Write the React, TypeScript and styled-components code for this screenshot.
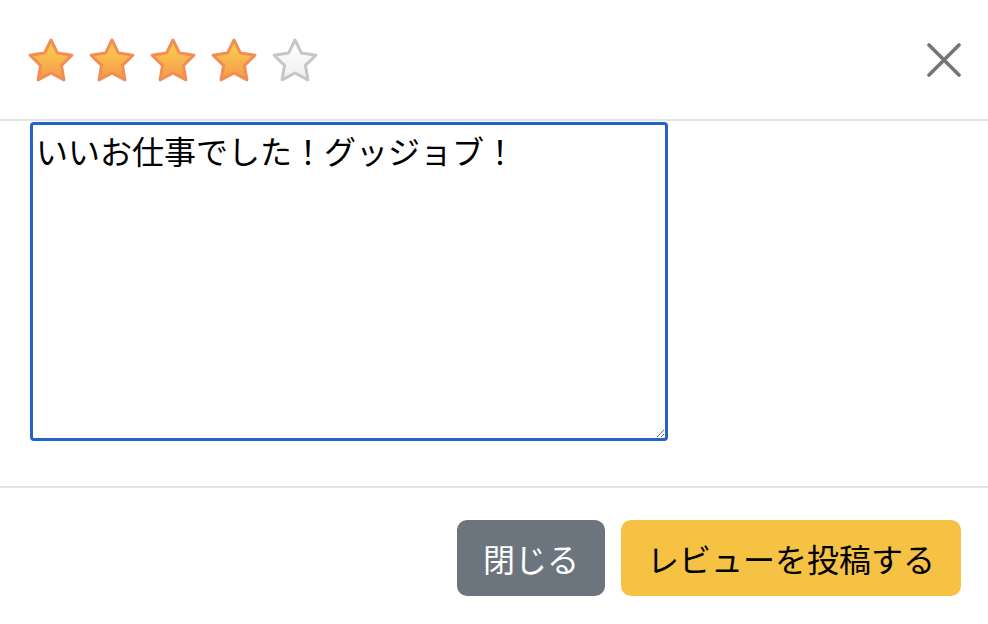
import React from 'react'
import styled, { createGlobalStyle } from 'styled-components'

const GlobalStyle = createGlobalStyle`
  html, body {
    margin: 0;
    padding: 0;
    background: #ffffff;
  }
  body {
    font-family: "Noto Sans CJK JP", "Noto Sans", sans-serif;
    color: #212529;
  }
`;

const Modal = styled.div`
  width: 988px;
  height: 624px;
  display: flex;
  flex-direction: column;
  background: #fff;
`;

const Header = styled.div`
  height: 121px;
  display: flex;
  align-items: center;
  justify-content: space-between;
  padding: 0 26px 0 27px;
  border-bottom: 2px solid #e3e4e6;
  box-sizing: border-box;
`;

const Stars = styled.div`
  display: flex;
  gap: 13px;
`;

const CloseButton = styled.button`
  width: 36px;
  height: 36px;
  padding: 0;
  border: none;
  background: none;
  display: flex;
  align-items: center;
  justify-content: center;
  cursor: pointer;
`;

const Body = styled.div`
  padding: 1px 30px 45px;
  border-bottom: 2px solid #e3e4e6;
`;

const TextArea = styled.textarea`
  display: block;
  width: 638px;
  height: 319px;
  box-sizing: border-box;
  border: 3px solid #2563c7;
  border-radius: 4px;
  padding: 2px 3px;
  margin: 0;
  font-family: "Noto Sans CJK JP", "Noto Sans", sans-serif;
  font-size: 32px;
  color: #000;
  outline: none;
  resize: both;
`;

const Footer = styled.div`
  flex: 1;
  display: flex;
  justify-content: flex-end;
  align-items: flex-start;
  gap: 16px;
  padding: 32px 27px 0;
`;

const Button = styled.button<{ $variant: 'secondary' | 'warning' }>`
  height: 76px;
  padding: 0 24px;
  border: 2px solid ${p => (p.$variant === 'secondary' ? '#6c757d' : '#f5c244')};
  border-radius: 10px;
  background: ${p => (p.$variant === 'secondary' ? '#6c757d' : '#f5c244')};
  color: ${p => (p.$variant === 'secondary' ? '#ffffff' : '#000000')};
  font-family: "Noto Sans CJK JP", "Noto Sans", sans-serif;
  font-size: 32px;
  line-height: 48px;
  cursor: pointer;
`;

const starPath =
  'M24 3 L30.47 16.1 L44.92 18.2 L34.46 28.4 L36.93 42.8 L24 36 L11.07 42.8 L13.54 28.4 L3.08 18.2 L17.53 16.1 Z';

const Star: React.FC<{ filled: boolean; id: string }> = ({ filled, id }) => (
  <svg width="48" height="46" viewBox="0 0 48 46">
    <defs>
      <linearGradient id={id} x1="0" y1="0" x2="0" y2="1">
        {filled ? (
          <>
            <stop offset="0%" stopColor="#fdd44f" />
            <stop offset="100%" stopColor="#f5984b" />
          </>
        ) : (
          <>
            <stop offset="0%" stopColor="#ffffff" />
            <stop offset="100%" stopColor="#eeeeee" />
          </>
        )}
      </linearGradient>
      <filter id={id + 'b'} x="-10%" y="-10%" width="120%" height="120%">
        <feGaussianBlur stdDeviation="0.5" />
      </filter>
    </defs>
    <path
      d={starPath}
      fill={`url(#${id})`}
      stroke={filled ? '#f28d55' : '#c6c6c6'}
      strokeWidth="3"
      strokeLinejoin="round"
      filter={`url(#${id}b)`}
    />
  </svg>
);

const CloseIcon = () => (
  <svg width="34" height="34" viewBox="0 0 34 34">
    <path d="M2 2 L32 32 M32 2 L2 32" stroke="#757575" strokeWidth="3.6" strokeLinecap="round" />
  </svg>
);

const App: React.FC = () => {
  const [text, setText] = React.useState('いいお仕事でした！グッジョブ！');
  const rating = 4;

  return (
    <Modal>
      <GlobalStyle />
      <Header>
        <Stars>
          {[1, 2, 3, 4, 5].map(n => (
            <Star key={n} id={'star' + n} filled={n <= rating} />
          ))}
        </Stars>
        <CloseButton aria-label="close">
          <CloseIcon />
        </CloseButton>
      </Header>
      <Body>
        <TextArea value={text} onChange={e => setText(e.target.value)} />
      </Body>
      <Footer>
        <Button $variant="secondary">閉じる</Button>
        <Button $variant="warning">レビューを投稿する</Button>
      </Footer>
    </Modal>
  );
};

export default App;
